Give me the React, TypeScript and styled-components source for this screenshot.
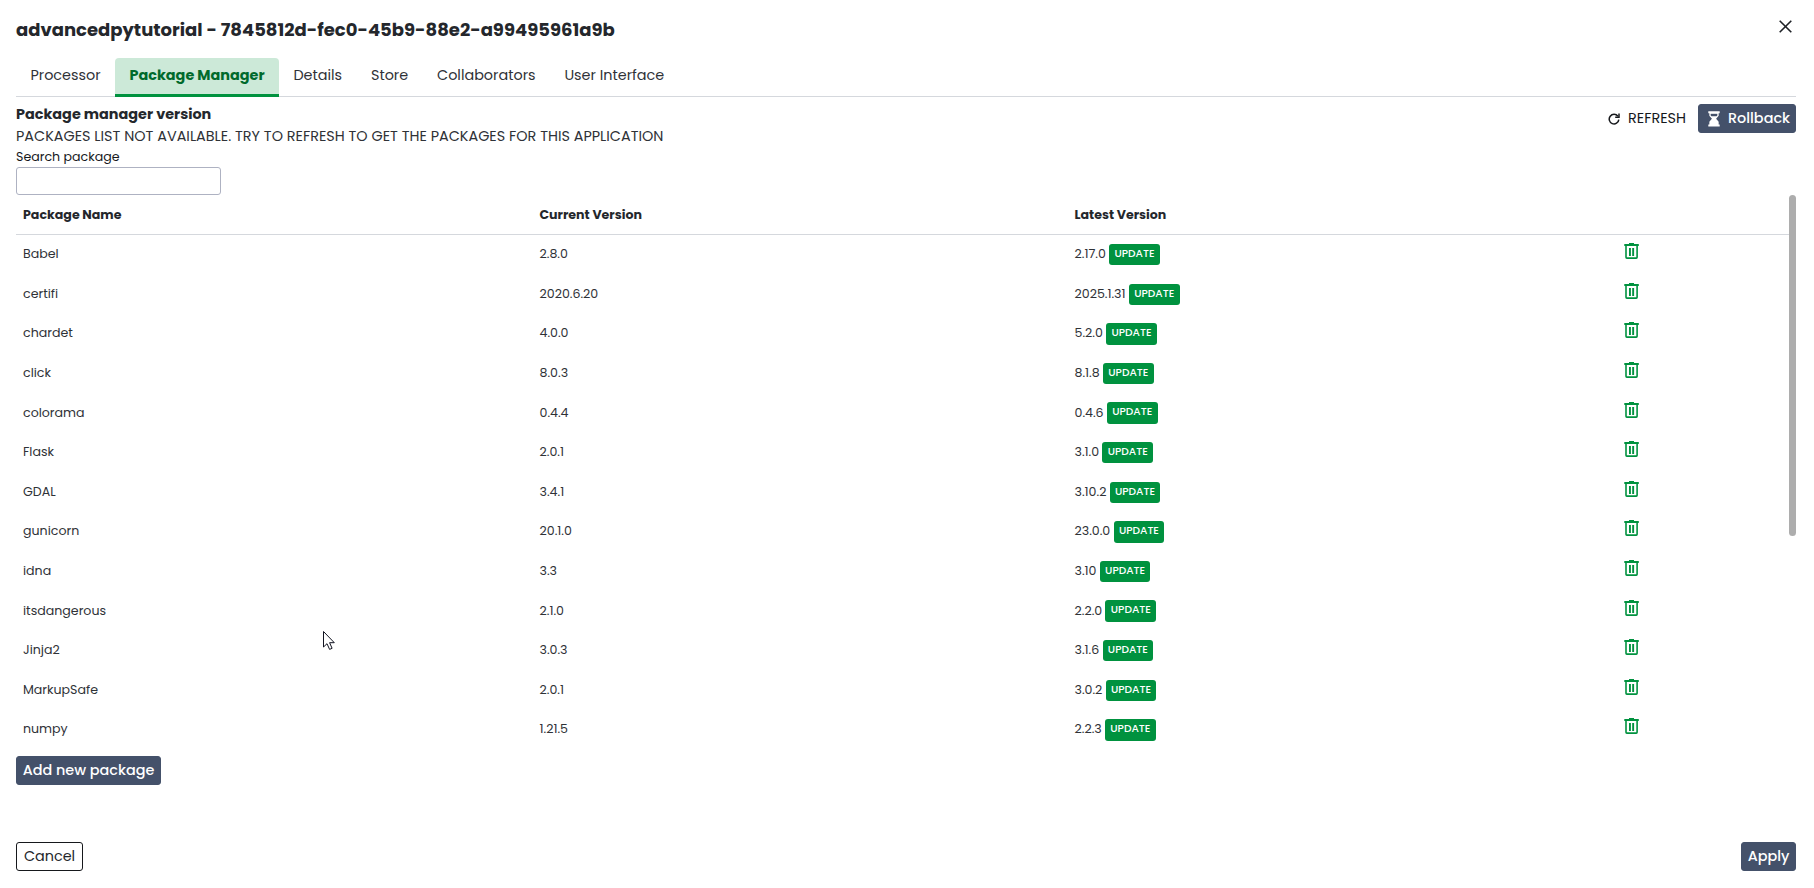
import React from 'react';
import styled, { createGlobalStyle } from 'styled-components';

const colors = {
  text: '#24272c',
  soft: '#2f3237',
  line: '#d5d8dd',
  green: '#00923f',
  slate: '#44516a',
};

const GlobalStyle = createGlobalStyle`
  * { box-sizing: border-box; }
  body {
    margin: 0;
    background: #fff;
    color: ${colors.text};
    font-family: Poppins, Inter, "Open Sans", sans-serif;
    font-size: 14.4px;
  }
`;

const Dialog = styled.main`
  width: 1814px;
  height: 888px;
  padding: 0 18px 17px 16px;
  display: flex;
  flex-direction: column;
  overflow: hidden;
`;

const Header = styled.header`
  display: flex;
  justify-content: space-between;
  height: 58px;
`;

const Title = styled.h1`
  margin: 0;
  font-size: 18px;
  font-weight: 700;
  line-height: 59px;
`;

const CloseButton = styled.button`
  width: 21px;
  height: 21px;
  margin-top: 16px;
  padding: 0 4px;
  border: 0;
  background: none;
  display: flex;
  align-items: center;
`;

const Tabs = styled.nav`
  display: flex;
  height: 39px;
  box-shadow: inset 0 -1px ${colors.line};
`;

const Tab = styled.button<{ $active?: boolean }>`
  height: 39px;
  padding: 0 14.45px 6px;
  border: 0;
  border-radius: 4px 4px 0 0;
  background: ${(p) => (p.$active ? '#cce9d8' : 'transparent')};
  box-shadow: ${(p) => (p.$active ? `inset 0 -3px ${colors.green}` : 'none')};
  color: ${(p) => (p.$active ? '#006a2c' : colors.soft)};
  font: inherit;
  font-weight: ${(p) => (p.$active ? 700 : 400)};
  line-height: 32px;
  white-space: nowrap;
`;

const Toolbar = styled.section`
  display: flex;
  justify-content: space-between;
  height: 98px;
  padding-top: 6px;
`;

const Info = styled.div`
  display: flex;
  flex-direction: column;
`;

const Heading = styled.h2`
  margin: 0;
  font-size: 14.4px;
  font-weight: 700;
  line-height: 22px;
`;

const Message = styled.p`
  margin: 0;
  color: ${colors.soft};
  line-height: 22px;
`;

const SearchLabel = styled.label`
  font-size: 12.6px;
  line-height: 20px;
  color: #16181c;
`;

const SearchInput = styled.input`
  width: 205px;
  height: 28px;
  border: 1px solid #aeb2c2;
  border-radius: 3px;
  background: #fff;
`;

const Actions = styled.div`
  display: flex;
  align-items: center;
  height: 29px;
  margin-top: 1px;
  gap: 12px;
`;

const RefreshButton = styled.button`
  display: flex;
  align-items: center;
  gap: 8px;
  height: 29px;
  padding: 0;
  border: 0;
  background: none;
  color: #16181c;
  font: inherit;
`;

const Button = styled.button<{ $width: number; $outline?: boolean }>`
  display: flex;
  align-items: center;
  justify-content: center;
  flex: none;
  gap: 8px;
  width: ${(p) => p.$width}px;
  height: 29px;
  padding: 0;
  border: 1px solid ${(p) => (p.$outline ? '#16181c' : colors.slate)};
  border-radius: 3px;
  background: ${(p) => (p.$outline ? '#fff' : colors.slate)};
  color: ${(p) => (p.$outline ? colors.text : '#fff')};
  font: inherit;
  font-weight: ${(p) => (p.$outline ? 400 : 500)};
  white-space: nowrap;
`;

const HourglassSvg = styled.svg`
  flex: none;
  margin: 1px 0 0 4px;
`;

const TableArea = styled.div`
  display: flex;
  flex: none;
  height: 561px;
`;

const Table = styled.div`
  flex: 1;
  font-size: 12.6px;
`;

const Scrollbar = styled.div`
  width: 7px;
  height: 341px;
  border-radius: 3.5px;
  background: #adadad;
`;

const Row = styled.div<{ $head?: boolean }>`
  display: grid;
  grid-template-columns: 516.5px 535px 549.5px 1fr;
  align-items: center;
  height: ${(p) => (p.$head ? '40px' : '39.6px')};
  padding-top: ${(p) => (p.$head ? '1px' : '0')};
  border-bottom: ${(p) => (p.$head ? `1px solid ${colors.line}` : '0')};
  font-weight: ${(p) => (p.$head ? 700 : 400)};
  color: ${(p) => (p.$head ? colors.text : colors.soft)};
`;

const Cell = styled.div`
  display: flex;
  align-items: center;
  gap: 3.3px;
  padding: 0 0 1px 7px;
  white-space: nowrap;
`;

const IconCell = styled(Cell)`
  padding-bottom: 7px;
`;

const Badge = styled.span`
  height: 21.4px;
  margin-top: 1px;
  padding: 0 5.3px;
  border-radius: 3px;
  background: ${colors.green};
  color: #fff;
  font-size: 10.6px;
  font-weight: 500;
  line-height: 19px;
`;

const Footer = styled.footer`
  display: flex;
  justify-content: space-between;
  margin-top: auto;
`;

const Cursor = styled.svg`
  position: absolute;
  left: 322px;
  top: 630px;
`;

const tabs = ['Processor', 'Package Manager', 'Details', 'Store', 'Collaborators', 'User Interface'];

const packages = [
  { name: 'Babel', current: '2.8.0', latest: '2.17.0' },
  { name: 'certifi', current: '2020.6.20', latest: '2025.1.31' },
  { name: 'chardet', current: '4.0.0', latest: '5.2.0' },
  { name: 'click', current: '8.0.3', latest: '8.1.8' },
  { name: 'colorama', current: '0.4.4', latest: '0.4.6' },
  { name: 'Flask', current: '2.0.1', latest: '3.1.0' },
  { name: 'GDAL', current: '3.4.1', latest: '3.10.2' },
  { name: 'gunicorn', current: '20.1.0', latest: '23.0.0' },
  { name: 'idna', current: '3.3', latest: '3.10' },
  { name: 'itsdangerous', current: '2.1.0', latest: '2.2.0' },
  { name: 'Jinja2', current: '3.0.3', latest: '3.1.6' },
  { name: 'MarkupSafe', current: '2.0.1', latest: '3.0.2' },
  { name: 'numpy', current: '1.21.5', latest: '2.2.3' },
];

const CloseIcon = () => (
  <svg width="13" height="13" viewBox="0 0 13 13" stroke="#1e2126" strokeWidth="1.6">
    <path d="M.7.7l11.6 11.6M12.3.7L.7 12.3" />
  </svg>
);

const RefreshIcon = () => (
  <svg width="12" height="12" viewBox="0 0 12 12" fill="none" stroke="#16181c" strokeWidth="1.5">
    <path d="M9.9 3.3A4.8 4.8 0 1 0 10.8 6.6" />
    <path d="M11 .6v3.7H7.2" />
  </svg>
);

const HourglassIcon = () => (
  <HourglassSvg width="12" height="16" viewBox="0 0 12 16" fill="#fff">
    <path d="M.3.3h11.4v1.9H.3zM.3 13.5h11.4v1.9H.3z" />
    <path d="M2 2v2.6L4.8 7.8 2 11v3h8v-3L7.2 7.8 10 4.6V2z" fill="none" stroke="#fff" strokeWidth="1.3" />
    <path d="M3 5.2h6L7.2 7.8 10 11v3H2v-3l2.8-3.2z" />
  </HourglassSvg>
);

const TrashIcon = () => (
  <svg width="16" height="16" viewBox="0 0 16 16" fill={colors.green}>
    <path d="M5 0h5v1.1h4.800v1.900H.3V1.100H5z" />
    <path d="M2 2v12.300q0 .8.8.8h9.500q.8 0 .8-.8V2" fill="none" stroke={colors.green} strokeWidth="1.600" />
    <path d="M5 5h1.900v8H5zM8.200 5h1.900v8H8.200z" />
  </svg>
);

export default function App() {
  return (
    <>
      <GlobalStyle />
      <Dialog>
        <Header>
          <Title>advancedpytutorial - 7845812d-fec0-45b9-88e2-a99495961a9b</Title>
          <CloseButton aria-label="Close">
            <CloseIcon />
          </CloseButton>
        </Header>
        <Tabs>
          {tabs.map((label) => (
            <Tab key={label} $active={label === 'Package Manager'}>
              {label}
            </Tab>
          ))}
        </Tabs>
        <Toolbar>
          <Info>
            <Heading>Package manager version</Heading>
            <Message>PACKAGES LIST NOT AVAILABLE. TRY TO REFRESH TO GET THE PACKAGES FOR THIS APPLICATION</Message>
            <SearchLabel htmlFor="search">Search package</SearchLabel>
            <SearchInput id="search" />
          </Info>
          <Actions>
            <RefreshButton>
              <RefreshIcon />
              REFRESH
            </RefreshButton>
            <Button $width={98}>
              <HourglassIcon />
              Rollback
            </Button>
          </Actions>
        </Toolbar>
        <TableArea>
          <Table>
            <Row $head>
              <Cell>Package Name</Cell>
              <Cell>Current Version</Cell>
              <Cell>Latest Version</Cell>
            </Row>
            {packages.map(({ name, current, latest }) => (
              <Row key={name}>
                <Cell>{name}</Cell>
                <Cell>{current}</Cell>
                <Cell>
                  <span>{latest}</span>
                  <Badge>UPDATE</Badge>
                </Cell>
                <IconCell>
                  <TrashIcon />
                </IconCell>
              </Row>
            ))}
          </Table>
          <Scrollbar />
        </TableArea>
        <Button $width={145}>Add new package</Button>
        <Footer>
          <Button $width={67} $outline>
            Cancel
          </Button>
          <Button $width={55}>Apply</Button>
        </Footer>
      </Dialog>
      <Cursor width="14" height="21" viewBox="0 0 14 21" fill="#fff" stroke="#111320">
        <path d="M1.5 1.5v15.5l3.5-3.3 2.6 5.700 2.500-1.100-2.500-5.600h4.700z" />
      </Cursor>
    </>
  );
}
